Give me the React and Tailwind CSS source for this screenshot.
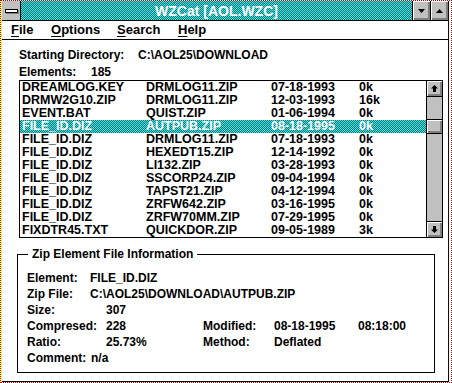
const ROWS = [
  ["DREAMLOG.KEY", "DRMLOG11.ZIP", "07-18-1993", "0k"],
  ["DRMW2G10.ZIP", "DRMLOG11.ZIP", "12-03-1993", "16k"],
  ["EVENT.BAT", "QUIST.ZIP", "01-06-1994", "0k"],
  ["FILE_ID.DIZ", "AUTPUB.ZIP", "08-18-1995", "0k"],
  ["FILE_ID.DIZ", "DRMLOG11.ZIP", "07-18-1993", "0k"],
  ["FILE_ID.DIZ", "HEXEDT15.ZIP", "12-14-1992", "0k"],
  ["FILE_ID.DIZ", "LI132.ZIP", "03-28-1993", "0k"],
  ["FILE_ID.DIZ", "SSCORP24.ZIP", "09-04-1994", "0k"],
  ["FILE_ID.DIZ", "TAPST21.ZIP", "04-12-1994", "0k"],
  ["FILE_ID.DIZ", "ZRFW642.ZIP", "03-16-1995", "0k"],
  ["FILE_ID.DIZ", "ZRFW70MM.ZIP", "07-29-1995", "0k"],
  ["FIXDTR45.TXT", "QUICKDOR.ZIP", "09-05-1989", "3k"],
];

const SELECTED = 3;

const bevel = "bg-[#c0c0c0] shadow-[inset_1px_1px_#ffffff,inset_-1px_-1px_#808080,inset_-2px_-2px_#808080]";
const dither = "bg-[repeating-conic-gradient(#008080_0%_25%,#55dada_0%_50%)] bg-[length:2px_2px]";

const Triangle = ({ up }) => (
  <svg width="7" height="4" viewBox="0 0 7 4">
    <polygon points={up ? "3.5,0 7,4 0,4" : "0,0 7,0 3.5,4"} fill="#000" />
  </svg>
);

const Arrow = ({ up }) => (
  <svg width="7" height="7" viewBox="0 0 7 7">
    <polygon
      points={up ? "3.5,0 7,3.5 5,3.5 5,7 2,7 2,3.5 0,3.5" : "2,0 5,0 5,3.5 7,3.5 3.5,7 0,3.5 2,3.5"}
      fill="#000"
    />
  </svg>
);

const MenuItem = ({ first, rest }) => (
  <span>
    <span className="underline decoration-1 underline-offset-2">{first}</span>
    {rest}
  </span>
);

const InfoRow = ({ children }) => <div className="relative flex h-[16px] items-center">{children}</div>;

export default function App() {
  return (
    <div className="h-[383px] w-[452px] overflow-hidden border border-dotted border-[#c00000] bg-white font-['Liberation_Sans',Arial,sans-serif] font-bold text-black">
      <div className="flex h-full">
        <div className="w-[1px] bg-[#ffff00]" />
        <div className="flex h-full w-[447px] flex-col border-r border-b border-black">
          {/* title bar */}
          <div className="flex h-[20px] shrink-0 border-b border-black">
            <div className="flex w-[19px] items-center justify-center border-r border-black bg-[#c0c0c0]">
              <div className="h-[4px] w-[13px] border border-black bg-white shadow-[1px_1px_#808080]" />
            </div>
            <div className={`flex flex-1 items-center justify-center ${dither}`}>
              <span className="text-[14px] leading-none text-white">WZCat [AOL.WZC]</span>
            </div>
            <div className={`flex w-[18px] items-center justify-center border-l border-black ${bevel}`}>
              <Triangle />
            </div>
            <div className={`flex w-[18px] items-center justify-center border-l border-black ${bevel}`}>
              <Triangle up />
            </div>
          </div>

          {/* menu bar */}
          <div className="flex h-[19px] shrink-0 items-center border-b border-black pl-[9px] text-[13px]">
            <div className="w-[40px]">
              <MenuItem first="F" rest="ile" />
            </div>
            <div className="w-[66px]">
              <MenuItem first="O" rest="ptions" />
            </div>
            <div className="w-[61px]">
              <MenuItem first="S" rest="earch" />
            </div>
            <MenuItem first="H" rest="elp" />
          </div>

          <div className="flex flex-1 flex-col pt-[6px] text-[12px]">
            <div className="flex h-[17px] items-center pl-[17px]">
              <span className="w-[119px]">Starting Directory:</span>
              <span>C:\AOL25\DOWNLOAD</span>
            </div>
            <div className="flex h-[17px] items-center pl-[17px]">
              <span className="w-[72px]">Elements:</span>
              <span>185</span>
            </div>

            {/* list box */}
            <div className="ml-[17px] flex h-[158px] w-[424px] border border-black text-[12.5px]">
              <div className="flex-1">
                {ROWS.map((row, i) => (
                  <div
                    key={i}
                    className={`flex h-[13px] items-center pl-[2px] leading-none ${i === SELECTED ? `${dither} text-white` : ""}`}
                  >
                    <span className="w-[124px]">{row[0]}</span>
                    <span className="w-[125px]">{row[1]}</span>
                    <span className="w-[88px]">{row[2]}</span>
                    <span>{row[3]}</span>
                  </div>
                ))}
              </div>
              <div className="flex w-[16px] flex-col border-l border-black bg-[#c0c0c0]">
                <div className={`flex h-[16px] items-center justify-center border-b border-black ${bevel}`}>
                  <Arrow up />
                </div>
                <div className="h-[22px]" />
                <div className={`h-[15px] border-y border-black ${bevel}`} />
                <div className="flex-1" />
                <div className={`flex h-[16px] items-center justify-center border-t border-black ${bevel}`}>
                  <Arrow />
                </div>
              </div>
            </div>

            {/* group box */}
            <div className="relative ml-[15px] mt-[16px] h-[119px] w-[418px] border border-black pl-[9px] pt-[15px]">
              <span className="absolute left-[10px] top-[-8px] bg-white px-[4px] leading-[14px]">
                Zip Element File Information
              </span>
              <InfoRow>
                <span className="w-[63px]">Element:</span>
                <span>FILE_ID.DIZ</span>
              </InfoRow>
              <InfoRow>
                <span className="w-[63px]">Zip File:</span>
                <span>C:\AOL25\DOWNLOAD\AUTPUB.ZIP</span>
              </InfoRow>
              <InfoRow>
                <span className="w-[79px]">Size:</span>
                <span>307</span>
              </InfoRow>
              <InfoRow>
                <span className="w-[79px]">Compresed:</span>
                <span className="w-[97px]">228</span>
                <span className="w-[71px]">Modified:</span>
                <span className="w-[84px]">08-18-1995</span>
                <span>08:18:00</span>
              </InfoRow>
              <InfoRow>
                <span className="w-[79px]">Ratio:</span>
                <span className="w-[97px]">25.73%</span>
                <span className="w-[71px]">Method:</span>
                <span>Deflated</span>
              </InfoRow>
              <InfoRow>
                <span className="w-[64px]">Comment:</span>
                <span>n/a</span>
              </InfoRow>
            </div>
          </div>
        </div>
      </div>
    </div>
  );
}
